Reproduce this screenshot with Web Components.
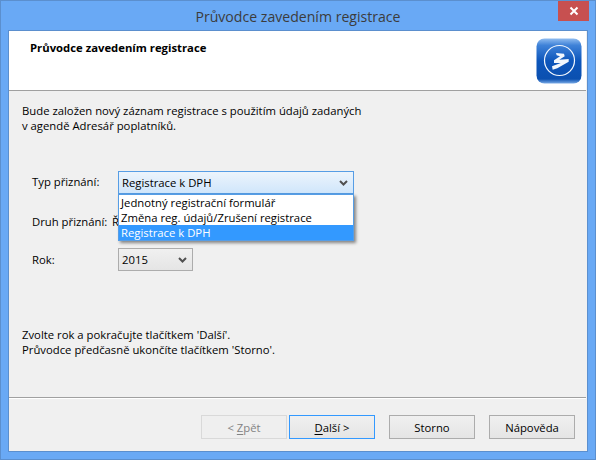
<!DOCTYPE html>
<html>
<head>
<meta charset="utf-8">
<title>Průvodce zavedením registrace</title>
<style>
    html, body { margin: 0; padding: 0; width: 596px; height: 460px; overflow: hidden; }
    body { font-family: "Open Sans", "Noto Sans", sans-serif; font-size: 11.3px; color: #000; }
</style>
</head>
<body>
<wizard-window caption="Průvodce zavedením registrace">
    <wizard-header>Průvodce zavedením registrace</wizard-header>
    <wizard-body></wizard-body>
    <wizard-footer></wizard-footer>
</wizard-window>

<script>
class WizardWindow extends HTMLElement {
    constructor() {
        super();
        this.attachShadow({ mode: 'open' });
        this.shadowRoot.innerHTML = `
            <style>
                :host { display: flex; flex-direction: column; box-sizing: border-box; width: 596px; height: 460px; background: #69a9f5; border: 1px solid #5b8fce; }
                .title { height: 29px; flex: none; position: relative; display: flex; justify-content: center; align-items: center; padding-top: 1px; box-sizing: border-box; font-size: 14.1px; color: #3c3c3c; }
                .close { position: absolute; top: 0; right: 6px; width: 31px; height: 20px; background: #c75050; display: flex; align-items: center; justify-content: center; }
                .content { flex: 1; display: flex; flex-direction: column; margin: 0 7px 7px; background: #f0f0f0; border: 1px solid #5b8fce; min-height: 0; }
            </style>
            <div class="title">
                <span>${this.getAttribute('caption')}</span>
                <div class="close">
                    <svg width="10" height="10" viewBox="0 0 10 10"><path d="M1.500 1.500l7 7M8.500 1.500l-7 7" stroke="#fff" stroke-width="2" fill="none"/></svg>
                </div>
            </div>
            <div class="content"><slot></slot></div>
        `;
    }
}

class AppLogo extends HTMLElement {
    constructor() {
        super();
        this.attachShadow({ mode: 'open' });
        this.shadowRoot.innerHTML = `
            <style>:host { display: block; width: 46px; height: 46px; }</style>
            <svg width="46" height="46" viewBox="0 0 46 46">
                <defs>
                    <linearGradient id="bg" x1="0" y1="0" x2="0" y2="1">
                        <stop offset="0" stop-color="#8fbcf0"/>
                        <stop offset="0.15" stop-color="#3f82d8"/>
                        <stop offset="0.5" stop-color="#0d56bb"/>
                        <stop offset="0.9" stop-color="#0b50b0"/>
                        <stop offset="1" stop-color="#79aae6"/>
                    </linearGradient>
                </defs>
                <rect x="0.5" y="0.5" width="45" height="45" rx="8" fill="url(#bg)"/>
                <circle cx="23.500" cy="22.500" r="15" fill="none" stroke="#f2f7fd" stroke-width="1.200"/>
                <path d="M20 15L28 15.700 28.700 18.300 23.300 21.700 32.700 21 32.700 23.700 21.300 30.300 16.700 31.700 16 28.300 24.700 25 18 25 18 22.300 24 18.300 20.700 17.300z" fill="#f2f7fd"/>
            </svg>
        `;
    }
}

class WizardHeader extends HTMLElement {
    constructor() {
        super();
        this.attachShadow({ mode: 'open' });
        this.shadowRoot.innerHTML = `
            <style>
                :host { display: flex; flex: none; justify-content: space-between; box-sizing: border-box; height: 60px; background: #fff; border-bottom: 1px solid #a0a0a0; padding: 7px 4px 0 21px; font-weight: 700; margin-right: 1px; }
                span { padding-top: 2px; }
            </style>
            <span><slot></slot></span>
            <app-logo></app-logo>
        `;
    }
}

class ComboBox extends HTMLElement {
    constructor() {
        super();
        this.attachShadow({ mode: 'open' });
        const focused = this.hasAttribute('focused');
        this.shadowRoot.innerHTML = `
            <style>
                :host { display: flex; align-items: center; justify-content: space-between; box-sizing: border-box; height: 23px; padding: 0 5px 0 3px; border: 1px solid ${focused ? '#569de5' : '#acacac'}; background: ${focused ? 'linear-gradient(#ecf4fc, #d0e6fb)' : 'linear-gradient(#f0f0f0, #e5e5e5)'}; position: relative; z-index: 1; }
            </style>
            <span><slot></slot></span>
            <svg width="9" height="6" viewBox="0 0 9 6"><path d="M1 1l3.500 3.500L8 1" stroke="#505050" stroke-width="2" fill="none"/></svg>
        `;
    }
}

class ComboList extends HTMLElement {
    constructor() {
        super();
        this.attachShadow({ mode: 'open' });
        this.shadowRoot.innerHTML = `
            <style>
                :host { display: block; position: absolute; z-index: 2; left: 0; right: 0; top: 23px; box-sizing: border-box; background: #fff; border: 1px solid #569de5; box-shadow: 2px 2px 3px rgba(0,0,0,.45); }
                ::slotted(div) { height: 15px; line-height: 15px; padding-left: 2px; white-space: nowrap; }
                ::slotted(.selected) { background: #3399ff; color: #fff; }
            </style>
            <slot></slot>
        `;
    }
}

class FormRow extends HTMLElement {
    constructor() {
        super();
        this.attachShadow({ mode: 'open' });
        this.shadowRoot.innerHTML = `
            <style>
                :host { display: flex; align-items: center; height: 23px; }
                .label { width: 86px; flex: none; white-space: nowrap; }
                :host([raised]) .label { padding-bottom: 3px; }
                .field { position: relative; }
            </style>
            <span class="label"><slot name="label"></slot></span>
            <div class="field"><slot></slot></div>
        `;
    }
}

class WizardBody extends HTMLElement {
    constructor() {
        super();
        this.attachShadow({ mode: 'open' });
        this.shadowRoot.innerHTML = `
            <style>
                :host { display: flex; flex-direction: column; flex: 1; box-sizing: border-box; padding: 12px 13px 0; border-bottom: 1px solid #a0a0a0; box-shadow: 0 1px 0 #fff; margin-right: 1px; }
                .intro { line-height: 15px; }
                .form { display: flex; flex-direction: column; gap: 16px; margin: 38px 0 0 10px; }
                .combo-wide { position: relative; width: 236px; }
                .combo-year { width: 75px; }
                .year-row { margin-top: -1px; }
                .cut { display: block; margin-left: -6px; }
                .hint { line-height: 15px; margin-top: 56px; }
            </style>
            <div class="intro">Bude založen nový záznam registrace s použitím údajů zadaných<br>v agendě Adresář poplatníků.</div>
            <div class="form">
                <form-row raised>
                    <span slot="label">Typ přiznání:</span>
                    <div class="combo-wide">
                        <combo-box focused>Registrace k DPH</combo-box>
                        <combo-list>
                            <div>Jednotný registrační formulář</div>
                            <div>Změna reg. údajů/Zrušení registrace</div>
                            <div class="selected">Registrace k DPH</div>
                        </combo-list>
                    </div>
                </form-row>
                <form-row>
                    <span slot="label">Druh přiznání:</span>
                    <span class="cut">Ř</span>
                </form-row>
                <form-row class="year-row">
                    <span slot="label">Rok:</span>
                    <combo-box class="combo-year">2015</combo-box>
                </form-row>
            </div>
            <div class="hint">Zvolte rok a pokračujte tlačítkem 'Další'.<br>Průvodce předčasně ukončíte tlačítkem 'Storno'.</div>
        `;
    }
}

class WizardButton extends HTMLElement {
    constructor() {
        super();
        this.attachShadow({ mode: 'open' });
        this.shadowRoot.innerHTML = `
            <style>
                :host { display: flex; align-items: center; justify-content: center; box-sizing: border-box; width: 86px; height: 24px; border: 1px solid #acacac; background: linear-gradient(#f0f0f0, #e5e5e5); }
                :host([default]) { border-color: #3399ff; }
                :host([disabled]) { border-color: #d9d9d9; background: #efefef; color: #838383; }
            </style>
            <span><slot></slot></span>
        `;
    }
}

class WizardFooter extends HTMLElement {
    constructor() {
        super();
        this.attachShadow({ mode: 'open' });
        this.shadowRoot.innerHTML = `
            <style>
                :host { display: flex; flex: none; justify-content: flex-end; box-sizing: border-box; height: 53px; padding: 17px 12px 0 0; }
                .gap { width: 14px; }
                .pair { width: 2px; }
                u { text-underline-offset: 2px; }
            </style>
            <wizard-button disabled>&lt; <u>Z</u>pět</wizard-button>
            <div class="pair"></div>
            <wizard-button default><u>D</u>alší &gt;</wizard-button>
            <div class="gap"></div>
            <wizard-button>Storno</wizard-button>
            <div class="gap"></div>
            <wizard-button>Nápověda</wizard-button>
        `;
    }
}

customElements.define('wizard-window', WizardWindow);
customElements.define('app-logo', AppLogo);
customElements.define('wizard-header', WizardHeader);
customElements.define('combo-box', ComboBox);
customElements.define('combo-list', ComboList);
customElements.define('form-row', FormRow);
customElements.define('wizard-body', WizardBody);
customElements.define('wizard-button', WizardButton);
customElements.define('wizard-footer', WizardFooter);
</script>
</body>
</html>
